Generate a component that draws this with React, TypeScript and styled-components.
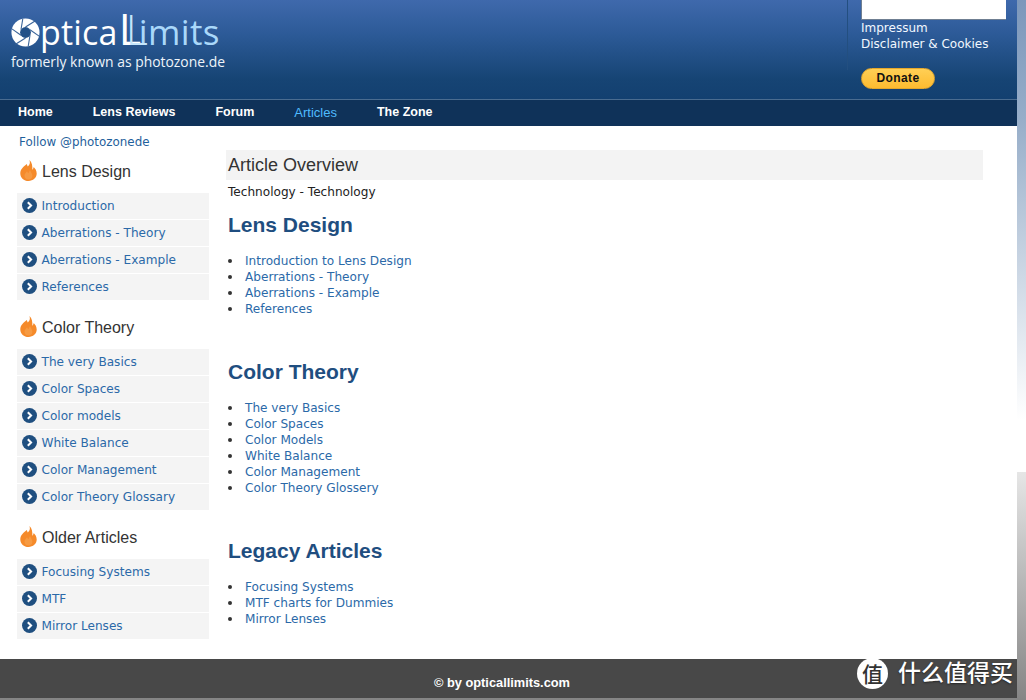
import React from "react";
import styled, { createGlobalStyle } from "styled-components";

const GlobalStyle = createGlobalStyle`
  html, body {
    margin: 0;
    padding: 0;
    height: 700px;
    overflow: hidden;
  }
  body {
    background: linear-gradient(
      to bottom,
      #7c97bb 0,
      #97aec9 120px,
      #ffffff 420px,
      #ffffff 472px,
      #e6e6e6 472px,
      #858585 700px
    );
    font-family: "DejaVu Sans", Verdana, sans-serif;
  }
`;

const Page = styled.div`
  width: 1017px;
  height: 698px;
  background: #fff;
  display: flex;
  flex-direction: column;
`;

const Header = styled.header`
  height: 99px;
  flex-shrink: 0;
  box-sizing: border-box;
  display: flex;
  justify-content: space-between;
  background: linear-gradient(to bottom, #3f69ac 0%, #2c5a97 35%, #164474 80%, #134070 100%);
`;

const Brand = styled.div`
  padding: 9px 0 0 11px;
  color: #fff;
  font-family: "Open Sans", sans-serif;
`;

const Logo = styled.div`
  display: flex;
  align-items: baseline;
  height: 44px;
  font-family: "Open Sans", sans-serif;
  font-weight: 400;
  font-size: 34px;
  line-height: 44px;
  letter-spacing: 0.2px;
  white-space: nowrap;

  svg {
    width: 29px;
    height: 29px;
    align-self: center;
    margin-top: 3px;
  }
`;

const BigL = styled.span`
  position: relative;
  font-size: 43px;
  line-height: 40px;
  font-weight: 400;
  margin-left: 1px;
  width: 12px;
  color: #fff;

  &::after {
    content: "L";
    position: absolute;
    left: 7px;
    top: 0;
    color: #c4e6fc;
    font-weight: 300;
  }
`;

const LogoRest = styled.span`
  color: #a9d8fa;
  margin-left: 8px;
  font-size: 35px;
  font-weight: 400;
  letter-spacing: 0.4px;
`;

const Tagline = styled.div`
  font-size: 13.9px;
  line-height: 18px;
  color: #eef4fa;
`;

const HeaderAside = styled.div`
  position: relative;
  width: 170px;
  box-sizing: border-box;
  padding-left: 14px;
  color: #fff;

  &::before {
    content: "";
    position: absolute;
    left: 0;
    top: 0;
    width: 1px;
    height: 70px;
    background: #234f80;
  }
`;

const AdBox = styled.div`
  width: 144px;
  height: 19px;
  background: #fff;
  border-bottom: 1px solid #6f7f92;
  border-left: 1px solid #6f7f92;
`;

const AsideLink = styled.div`
  font-family: "DejaVu Sans", Verdana, sans-serif;
  font-size: 12px;
  line-height: 16px;
  color: #f2f8ff;
  white-space: nowrap;
`;

const Donate = styled.div`
  width: 74px;
  height: 21px;
  margin-top: 16px;
  border-radius: 11px;
  background: linear-gradient(to bottom, #ffcf55, #fdbb30);
  border: 1px solid #e4a72c;
  box-sizing: border-box;
  color: #111;
  font-family: "Liberation Sans", Arial, sans-serif;
  font-size: 12px;
  font-weight: 700;
  letter-spacing: 0.4px;
  text-align: center;
  line-height: 19px;
`;

const Nav = styled.nav`
  height: 27px;
  flex-shrink: 0;
  box-sizing: border-box;
  display: flex;
  gap: 40px;
  padding-left: 18px;
  background: #0f3259;
  border-top: 1px solid #4a6c90;
`;

const NavLink = styled.a<{ $active?: boolean }>`
  font-family: "Liberation Sans", Arial, sans-serif;
  font-size: ${(p) => (p.$active ? "13px" : "12.5px")};
  font-weight: ${(p) => (p.$active ? 400 : 700)};
  line-height: 25px;
  color: ${(p) => (p.$active ? "#4fbcff" : "#ffffff")};
`;

const Body = styled.div`
  flex: 1;
  display: flex;
  min-height: 0;
`;

const Sidebar = styled.aside`
  width: 192px;
  margin-left: 17px;
  flex-shrink: 0;
`;

const Follow = styled.a`
  display: block;
  margin: 9px 0 0 2px;
  font-size: 11.9px;
  line-height: 15px;
  color: #1f5f9c;
`;

const SideSection = styled.section<{ $first?: boolean }>`
  margin-top: ${(p) => (p.$first ? "9px" : "15px")};
`;

const SideHeading = styled.h3`
  display: flex;
  align-items: center;
  gap: 5px;
  height: 26px;
  margin: 0 0 8px 3px;
  font-family: "Liberation Sans", Arial, sans-serif;
  font-size: 16px;
  font-weight: 400;
  color: #333;

  svg {
    width: 17px;
    height: 21px;
    margin-top: -4px;
  }
`;

const SideList = styled.ul`
  list-style: none;
  margin: 0;
  padding: 0;
  display: flex;
  flex-direction: column;
  gap: 1px;
`;

const SideItem = styled.li`
  height: 26px;
  display: flex;
  align-items: center;
  gap: 4.5px;
  padding-left: 5px;
  background: #f4f4f4;
  font-size: 12.1px;
  color: #2b69a8;

  svg {
    width: 15px;
    height: 15px;
    margin-top: -1px;
    flex-shrink: 0;
  }
`;

const Main = styled.main`
  flex: 1;
  margin-left: 17px;
  padding-top: 24px;
  max-width: 757px;
`;

const TitleBar = styled.h1`
  margin: 0;
  height: 30px;
  padding-left: 2px;
  background: #f3f3f3;
  font-family: "Liberation Sans", Arial, sans-serif;
  font-size: 18px;
  font-weight: 400;
  line-height: 30px;
  color: #333;
`;

const Crumb = styled.p`
  margin: 5px 0 0 2px;
  font-size: 12.1px;
  line-height: 15px;
  color: #222;
`;

const ArticleGroup = styled.section<{ $gap: number }>`
  margin-top: ${(p) => p.$gap}px;
`;

const GroupTitle = styled.h2`
  margin: 0 0 0 2px;
  height: 26px;
  font-family: "Liberation Sans", Arial, sans-serif;
  font-size: 21px;
  font-weight: 700;
  line-height: 26px;
  color: #1f4e80;
`;

const ArticleList = styled.ul`
  list-style: none;
  margin: 15px 0 0;
  padding: 0 0 0 19px;
  font-size: 12.1px;
  line-height: 16px;
  color: #222;
`;

const ArticleItem = styled.li`
  position: relative;

  &::before {
    content: "";
    position: absolute;
    left: -17px;
    top: 6px;
    width: 4px;
    height: 4px;
    border-radius: 50%;
    background: #333;
  }

  a {
    color: #2b69a8;
  }
`;

const Footer = styled.footer`
  position: relative;
  height: 39px;
  flex-shrink: 0;
  background: #484848;
  display: flex;
  justify-content: center;
  padding: 16px 13px 0 0;
  box-sizing: border-box;
  color: #fff;
  font-size: 12.8px;
  font-weight: 700;
  font-family: "Liberation Sans", Arial, sans-serif;
`;

const Watermark = styled.div`
  position: absolute;
  left: 857px;
  top: -1px;
  display: flex;
  align-items: center;
  gap: 10px;
  font-family: "Noto Sans CJK SC", sans-serif;
  font-size: 23px;
  font-weight: 500;
  line-height: 32px;
  white-space: nowrap;
  text-shadow: 0 1px 2px rgba(0, 0, 0, 0.5);
`;

const WatermarkBadge = styled.span`
  width: 31px;
  height: 31px;
  border-radius: 50%;
  background: #fff;
  color: #333;
  font-size: 21px;
  line-height: 31px;
  text-align: center;
  text-shadow: none;
`;

const WatermarkText = styled.span`
  margin-top: -5px;
`;

const Aperture = () => (
  <svg viewBox="0 0 32 32">
    <circle cx="16" cy="16" r="15.5" fill="#fff" />
    <circle cx="16" cy="16" r="6" fill="#235188" />
    <g stroke="#3a6499" strokeWidth="1.2">
      <path d="M16 10L27 3" />
      <path d="M21 13L31 20" />
      <path d="M21 19L19 31" />
      <path d="M16 22L5 29" />
      <path d="M11 19L1 12" />
      <path d="M11 13L13 1" />
    </g>
  </svg>
);

const Flame = () => (
  <svg viewBox="0 0 17 21">
    <path
      d="M9.5 0C10.5 3.2 9.4 5 7.8 6.6 7.3 5.8 7 5 6.9 4.1 3.4 6.6 .3 9.6.3 13.4.3 17.8 4 21 8.5 21s8.2-3 8.2-7.4c0-3.2-1.7-5.2-3-6.6-.2 1.2-.6 2-1.4 2.7C12.6 6.2 12.1 2.600 9.5 0z"
      fill="#f58a2a"
    />
    <path d="M8.5 19.5c-2.400 0-4-1.700-4-3.800 0-1.800 1.300-3 2.600-4.500.300 1 .8 1.500 1.500 2 .3-1.200.6-2 1.400-3 .6 1.800 2.400 3.300 2.400 5.500 0 2.100-1.700 3.800-3.900 3.800z" fill="#f69a42" />
  </svg>
);

const Bullet = () => (
  <svg viewBox="0 0 15 15">
    <circle cx="7.500" cy="7.500" r="7.500" fill="#1f4f80" />
    <path d="M5.800 4.200l3.300 3.300-3.300 3.300" fill="none" stroke="#fff" strokeWidth="2" />
  </svg>
);

const navItems = ["Home", "Lens Reviews", "Forum", "Articles", "The Zone"];

const sideSections = [
  { title: "Lens Design", items: ["Introduction", "Aberrations - Theory", "Aberrations - Example", "References"] },
  {
    title: "Color Theory",
    items: ["The very Basics", "Color Spaces", "Color models", "White Balance", "Color Management", "Color Theory Glossary"],
  },
  { title: "Older Articles", items: ["Focusing Systems", "MTF", "Mirror Lenses"] },
];

const groups = [
  {
    title: "Lens Design",
    gap: 12,
    items: ["Introduction to Lens Design", "Aberrations - Theory", "Aberrations - Example", "References"],
  },
  {
    title: "Color Theory",
    gap: 42,
    items: ["The very Basics", "Color Spaces", "Color Models", "White Balance", "Color Management", "Color Theory Glossery"],
  },
  { title: "Legacy Articles", gap: 42, items: ["Focusing Systems", "MTF charts for Dummies", "Mirror Lenses"] },
];

const App = () => {
  return (
    <>
      <GlobalStyle />
      <Page>
        <Header>
          <Brand>
            <Logo>
              <Aperture />
              <span>ptica</span>
              <BigL>L</BigL>
              <LogoRest>imits</LogoRest>
            </Logo>
            <Tagline>formerly known as photozone.de</Tagline>
          </Brand>
          <HeaderAside>
            <AdBox />
            <AsideLink>Impressum</AsideLink>
            <AsideLink>Disclaimer &amp; Cookies</AsideLink>
            <Donate>Donate</Donate>
          </HeaderAside>
        </Header>
        <Nav>
          {navItems.map((item) => (
            <NavLink key={item} $active={item === "Articles"}>
              {item}
            </NavLink>
          ))}
        </Nav>
        <Body>
          <Sidebar>
            <Follow>Follow @photozonede</Follow>
            {sideSections.map((section, i) => (
              <SideSection key={section.title} $first={i === 0}>
                <SideHeading>
                  <Flame />
                  {section.title}
                </SideHeading>
                <SideList>
                  {section.items.map((item) => (
                    <SideItem key={item}>
                      <Bullet />
                      {item}
                    </SideItem>
                  ))}
                </SideList>
              </SideSection>
            ))}
          </Sidebar>
          <Main>
            <TitleBar>Article Overview</TitleBar>
            <Crumb>Technology - Technology</Crumb>
            {groups.map((group) => (
              <ArticleGroup key={group.title} $gap={group.gap}>
                <GroupTitle>{group.title}</GroupTitle>
                <ArticleList>
                  {group.items.map((item) => (
                    <ArticleItem key={item}>
                      <a>{item}</a>
                    </ArticleItem>
                  ))}
                </ArticleList>
              </ArticleGroup>
            ))}
          </Main>
        </Body>
        <Footer>
          © by opticallimits.com
          <Watermark>
            <WatermarkBadge>值</WatermarkBadge>
            <WatermarkText>什么值得买</WatermarkText>
          </Watermark>
        </Footer>
      </Page>
    </>
  );
};

export default App;
